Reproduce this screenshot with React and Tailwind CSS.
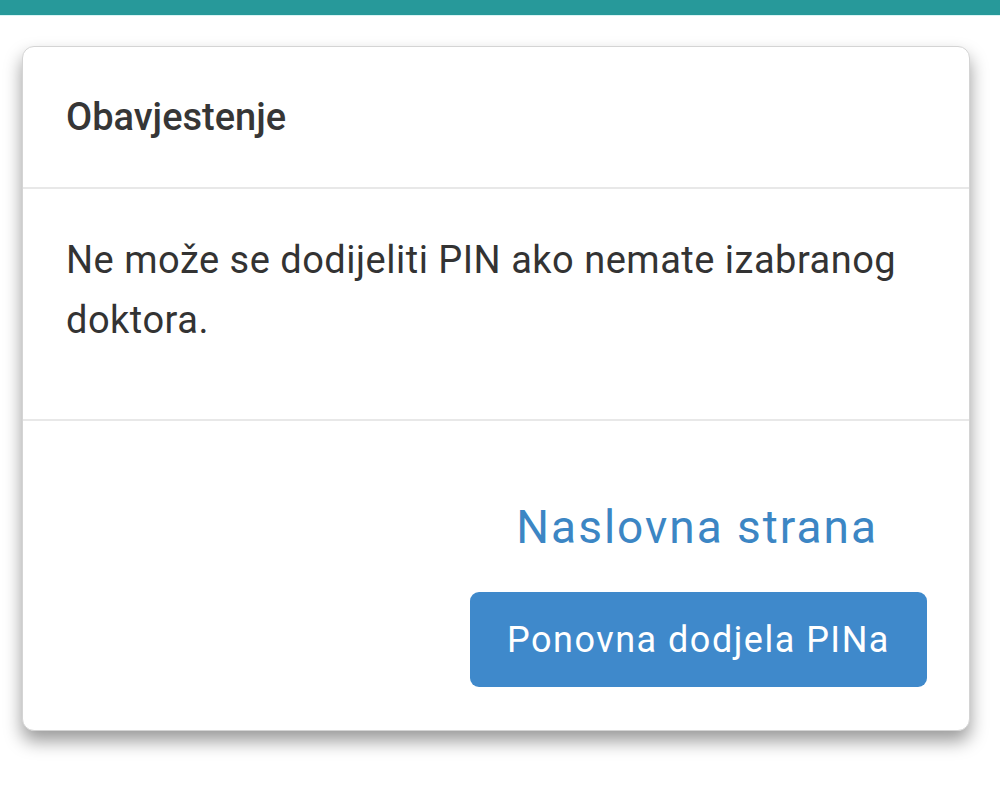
import React from 'react';

export default function App() {
  return (
    <div className="min-h-screen bg-white font-['Roboto',sans-serif]">
      <div className="h-[16px] bg-[#27999a] border-b border-[#d8f5f5]" />
      <div className="px-[22px] pt-[30px]">
        <div className="w-[948px] rounded-[12px] bg-white border border-[#d4d4d4] shadow-[0_10px_18px_rgba(0,0,0,0.4)]">
          <div className="h-[142px] px-[43px] flex items-center border-b-2 border-[#e8e8e8]">
            <h2 className="text-[38px] font-medium text-[#363636] leading-none">Obavjestenje</h2>
          </div>
          <div className="h-[232px] px-[43px] pt-[41px] border-b-2 border-[#e8e8e8]">
            <p className="text-[38px] tracking-[0.5px] leading-[60px] text-[#333]">
              Ne može se dodijeliti PIN ako nemate izabranog doktora.
            </p>
          </div>
          <div className="h-[309px] pr-[42px] pt-[76px] flex flex-col items-end">
            <a href="#" className="mr-[49px] text-[46px] tracking-[2px] leading-[60px] text-[#3c86c4]">Naslovna strana</a>
            <button className="mt-[35px] w-[457px] h-[95px] rounded-[9px] bg-[#3f89cb] text-white text-[36px] tracking-[1.5px]">
              Ponovna dodjela PINa
            </button>
          </div>
        </div>
      </div>
    </div>
  );
}
